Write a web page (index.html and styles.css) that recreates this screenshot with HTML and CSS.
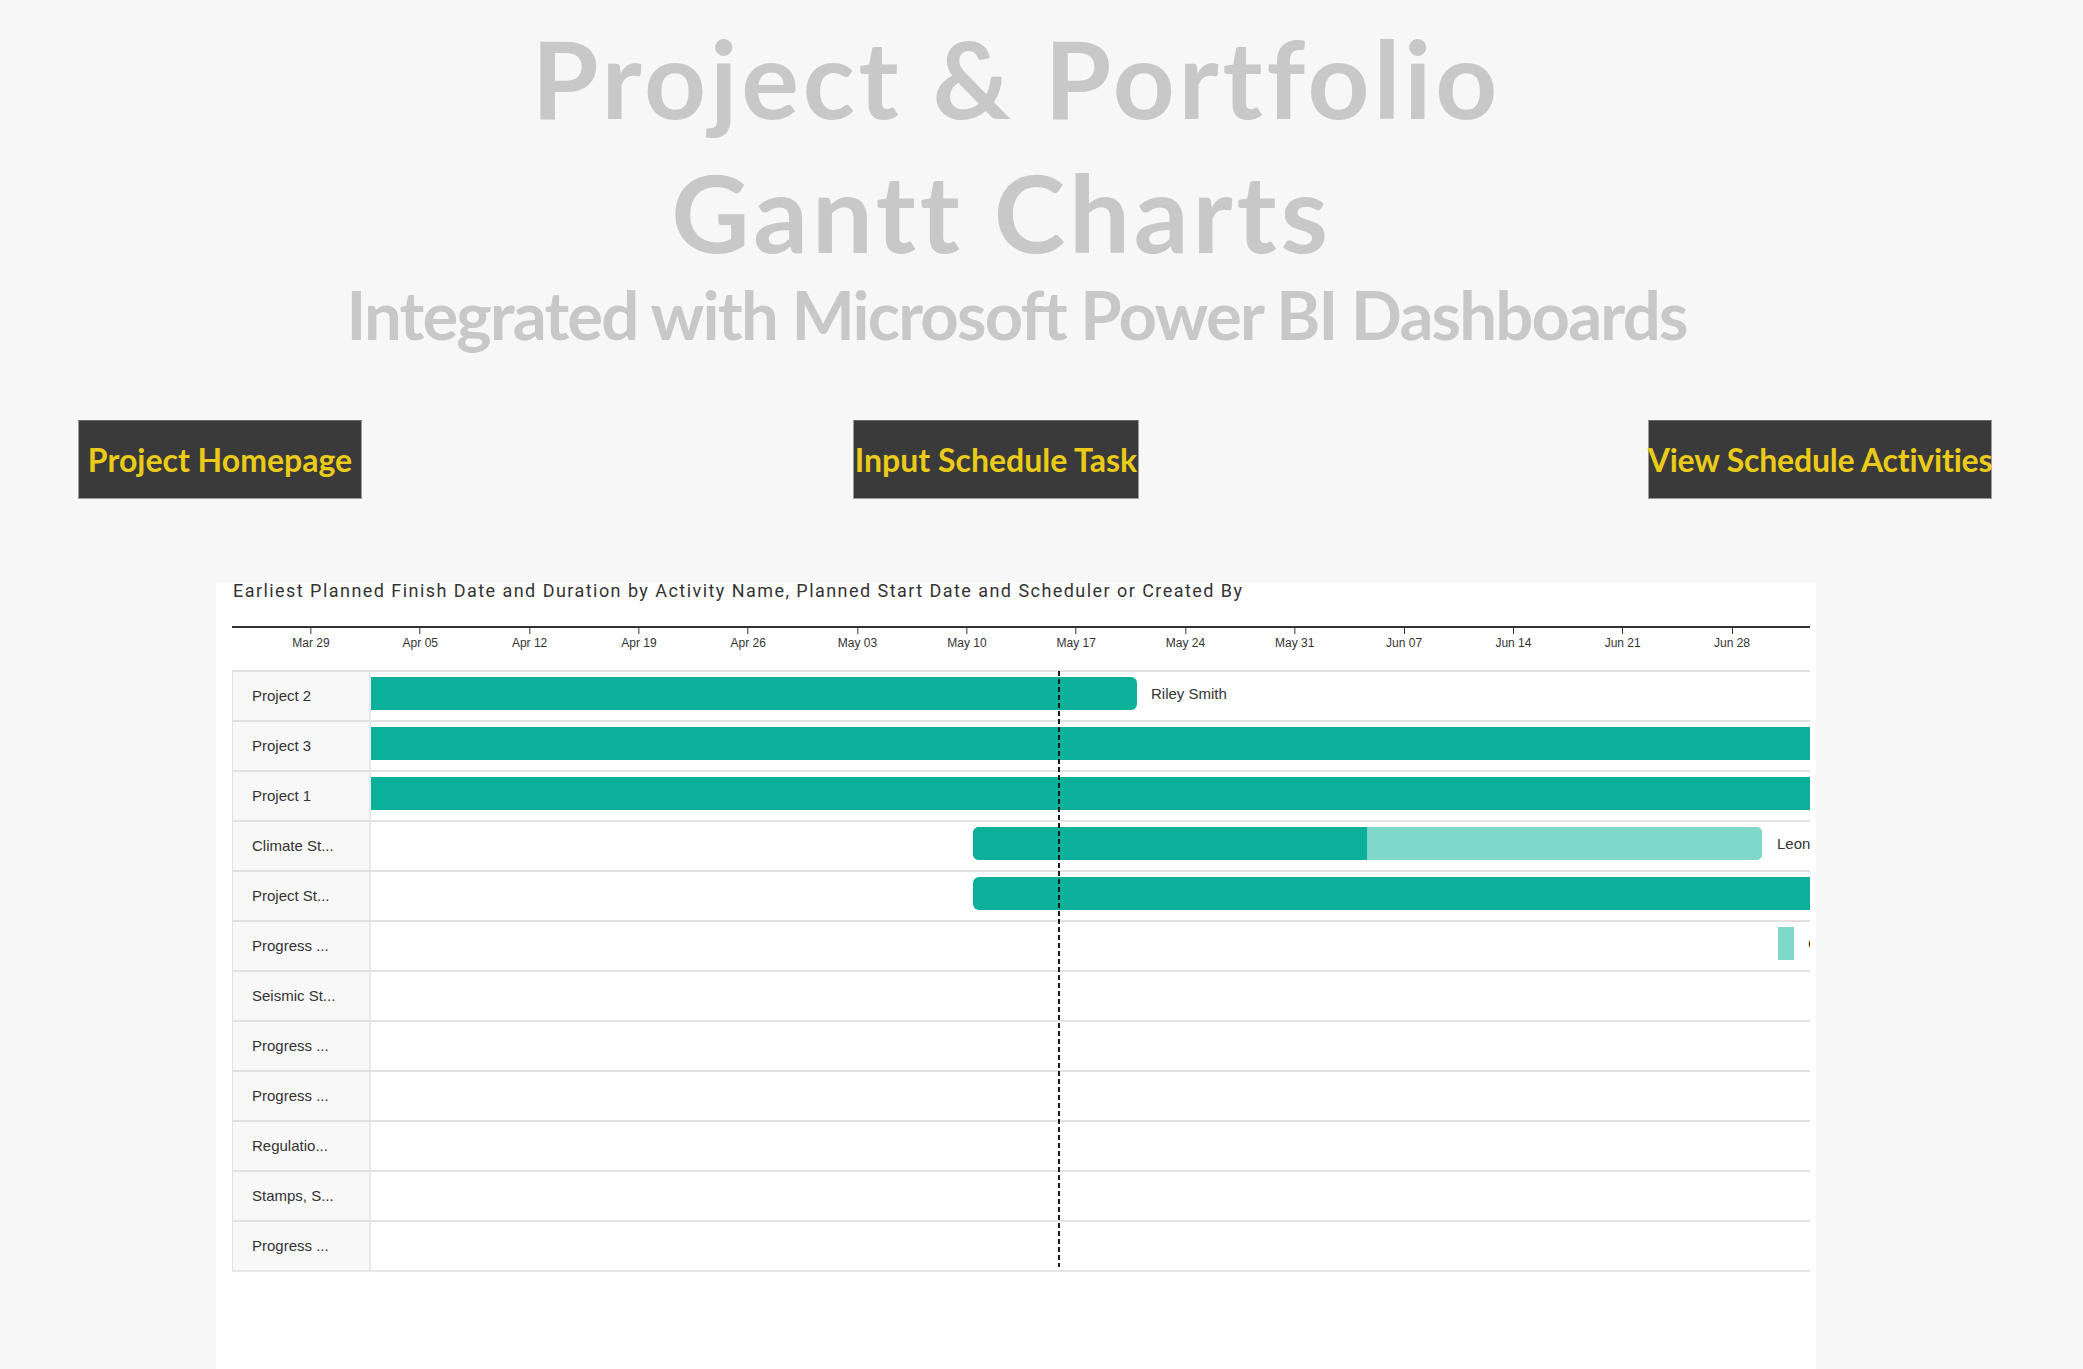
FILE: index.html
```html
<!DOCTYPE html>
<html lang="en">
<head>
    <meta charset="UTF-8">
    <title>Project &amp; Portfolio Gantt Charts</title>
    <link rel="stylesheet" href="styles.css">
</head>
<body>
    <header class="hero">
        <h1 class="hero-title">
            <span class="line">Project &amp; Portfolio</span>
            <span class="line line-2">Gantt Charts</span>
        </h1>
        <p class="hero-sub">Integrated with Microsoft Power BI Dashboards</p>
    </header>

    <nav class="nav-buttons">
        <a class="nav-btn btn-home" href="#">Project Homepage</a>
        <a class="nav-btn btn-input" href="#">Input Schedule Task</a>
        <a class="nav-btn btn-view" href="#">View Schedule Activities</a>
    </nav>

    <section class="panel">
        <div class="chart-title">Earliest Planned Finish Date and Duration by Activity Name, Planned Start Date and Scheduler or Created By</div>

        <div class="gantt">
            <div class="axis">
                <div class="tick" style="left: 79px"><i></i><span>Mar 29</span></div>
                <div class="tick" style="left: 188.3px"><i></i><span>Apr 05</span></div>
                <div class="tick" style="left: 297.6px"><i></i><span>Apr 12</span></div>
                <div class="tick" style="left: 406.9px"><i></i><span>Apr 19</span></div>
                <div class="tick" style="left: 516.2px"><i></i><span>Apr 26</span></div>
                <div class="tick" style="left: 625.5px"><i></i><span>May 03</span></div>
                <div class="tick" style="left: 734.9px"><i></i><span>May 10</span></div>
                <div class="tick" style="left: 844.2px"><i></i><span>May 17</span></div>
                <div class="tick" style="left: 953.5px"><i></i><span>May 24</span></div>
                <div class="tick" style="left: 1062.8px"><i></i><span>May 31</span></div>
                <div class="tick" style="left: 1172.1px"><i></i><span>Jun 07</span></div>
                <div class="tick" style="left: 1281.4px"><i></i><span>Jun 14</span></div>
                <div class="tick" style="left: 1390.7px"><i></i><span>Jun 21</span></div>
                <div class="tick" style="left: 1500px"><i></i><span>Jun 28</span></div>
            </div>

            <div class="rows">
                <div class="row">
                    <div class="row-label">Project 2</div>
                    <div class="track">
                        <div class="bar" style="left: -20px; width: 786px"></div>
                        <span class="bar-label" style="left: 780px">Riley Smith</span>
                    </div>
                </div>
                <div class="row">
                    <div class="row-label">Project 3</div>
                    <div class="track">
                        <div class="bar" style="left: -20px; width: 1500px"></div>
                    </div>
                </div>
                <div class="row">
                    <div class="row-label">Project 1</div>
                    <div class="track">
                        <div class="bar" style="left: -20px; width: 1500px"></div>
                    </div>
                </div>
                <div class="row">
                    <div class="row-label">Climate St...</div>
                    <div class="track">
                        <div class="bar bar-split" style="left: 602px; width: 789px">
                            <span class="done" style="width: 394px"></span>
                            <span class="rest"></span>
                        </div>
                        <span class="bar-label" style="left: 1406px">Leon</span>
                    </div>
                </div>
                <div class="row">
                    <div class="row-label">Project St...</div>
                    <div class="track">
                        <div class="bar" style="left: 602px; width: 1000px"></div>
                    </div>
                </div>
                <div class="row">
                    <div class="row-label">Progress ...</div>
                    <div class="track">
                        <div class="bar bar-light bar-flat" style="left: 1407px; width: 16px"></div>
                        <span class="bar-label" style="left: 1437px">Grace</span>
                    </div>
                </div>
                <div class="row">
                    <div class="row-label">Seismic St...</div>
                    <div class="track"></div>
                </div>
                <div class="row">
                    <div class="row-label">Progress ...</div>
                    <div class="track"></div>
                </div>
                <div class="row">
                    <div class="row-label">Progress ...</div>
                    <div class="track"></div>
                </div>
                <div class="row">
                    <div class="row-label">Regulatio...</div>
                    <div class="track"></div>
                </div>
                <div class="row">
                    <div class="row-label">Stamps, S...</div>
                    <div class="track"></div>
                </div>
                <div class="row">
                    <div class="row-label">Progress ...</div>
                    <div class="track"></div>
                </div>

                <div class="today-line"></div>
            </div>
        </div>
    </section>
</body>
</html>
```

FILE: styles.css
```css
body {
    margin: 0;
    background: #f7f7f7;
    font-family: Lato, "Open Sans", sans-serif;
    overflow: hidden;
}

.hero {
    padding: 10px 50px 0 0;
    text-align: center;
    color: #c8c8c8;
}

.hero-title {
    margin: 0;
    font-size: 108px;
    line-height: 134px;
    font-weight: 700;
    letter-spacing: 3.8px;
}

.hero-title .line {
    display: block;
}

.hero-title .line-2 {
    padding-right: 30px;
}

.hero-sub {
    margin: -4px 0 0;
    font-size: 67px;
    line-height: 80px;
    font-weight: 700;
    letter-spacing: -1.8px;
}

.nav-buttons {
    display: flex;
    margin-top: 66px;
    padding-left: 78px;
}

.nav-btn {
    display: flex;
    align-items: center;
    justify-content: center;
    height: 79px;
    box-sizing: border-box;
    background: #3a3a3a;
    border: 1px solid #9a9a9a;
    border-top-color: #6a6a6a;
    color: #eacb19;
    font-size: 32px;
    font-weight: 700;
    text-decoration: none;
    white-space: nowrap;
}

.btn-home { width: 284px; }
.btn-input { width: 286px; margin-left: 491px; }
.btn-view { width: 344px; margin-left: 509px; letter-spacing: -0.2px; }

.panel {
    margin: 83px 0 0 216px;
    width: 1600px;
    height: 787px;
    background: #fff;
}

.chart-title {
    padding-left: 17px;
    font-family: Roboto, sans-serif;
    font-size: 18px;
    line-height: 18px;
    letter-spacing: 1.45px;
    color: #333;
    white-space: nowrap;
}

.gantt {
    margin: 26px 0 0 16px;
    width: 1578px;
    font-family: "Liberation Sans", Arial, sans-serif;
    color: #333;
}

.axis {
    position: relative;
    height: 42px;
    border-top: 2px solid #333;
}

.tick {
    position: absolute;
    top: 0;
    display: flex;
    flex-direction: column;
    align-items: center;
    transform: translateX(-50%);
}

.tick i {
    width: 1px;
    height: 6px;
    background: #333;
}

.tick span {
    margin-top: 2px;
    font-size: 12px;
    line-height: 14px;
    white-space: nowrap;
}

.rows {
    position: relative;
    border-bottom: 2px solid #e6e6e6;
}

.row {
    display: flex;
    height: 50px;
    box-sizing: border-box;
    border-top: 2px solid #e1e1e1;
}

.row-label {
    width: 139px;
    box-sizing: border-box;
    padding: 0 0 2px 19px;
    display: flex;
    align-items: center;
    background: #f8f8f8;
    border-left: 1px solid #e3e3e3;
    border-right: 2px solid #e9e9e9;
    font-size: 15px;
    white-space: nowrap;
}

.track {
    position: relative;
    flex: 1;
    overflow: hidden;
}

.bar {
    position: absolute;
    top: 5px;
    height: 33px;
    border-radius: 6px;
    background: #0bb09b;
}

.bar-light {
    background: #80d8cb;
}

.bar-flat {
    border-radius: 0;
}

.bar-split {
    display: flex;
    overflow: hidden;
}

.bar-split .done {
    background: #0bb09b;
}

.bar-split .rest {
    flex: 1;
    background: #80d8cb;
}

.bar-label {
    position: absolute;
    top: 5px;
    line-height: 33px;
    font-size: 15px;
    white-space: nowrap;
}

.today-line {
    position: absolute;
    left: 826px;
    top: 1px;
    bottom: 3px;
    width: 2px;
    background: repeating-linear-gradient(to bottom, #1a1a1a 0 5px, transparent 5px 8px);
}
```
